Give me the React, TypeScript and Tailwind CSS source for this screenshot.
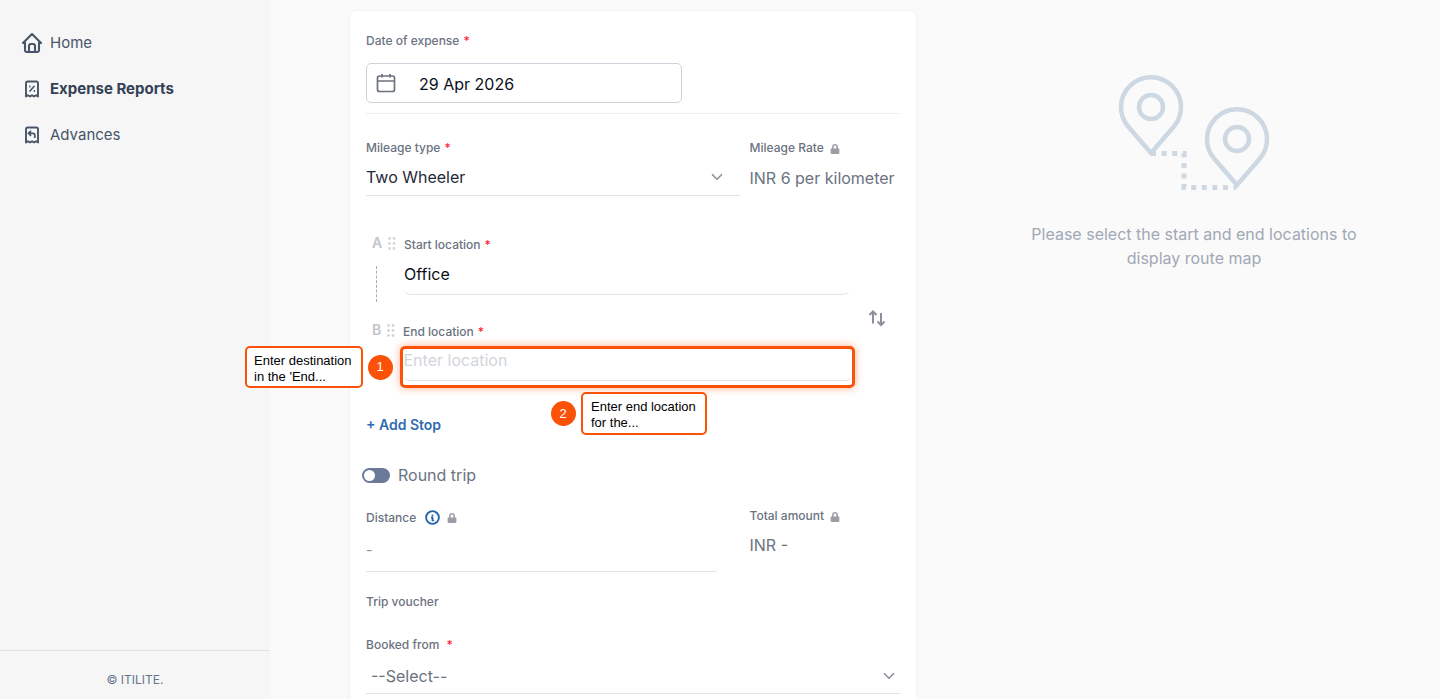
import { ChevronDown } from "lucide-react";
import { TbHome, TbInfoCircle } from "react-icons/tb";
import { FaLock } from "react-icons/fa";

function Required() {
  return <span className="text-[#ff1f3d] ml-1">*</span>;
}

function Label({ children }: { children: React.ReactNode }) {
  return <div className="text-xs leading-4 font-medium text-[#6b7280]">{children}</div>;
}

function SmallLock() {
  return <FaLock className="text-[#9b9ca6] ml-[6px] inline-block" size={10} />;
}

function NavItem({
  icon,
  label,
  active,
}: {
  icon: React.ReactNode;
  label: string;
  active?: boolean;
}) {
  return (
    <div className="h-[46px] flex items-center pl-[23px] gap-[9px]">
      <span className="w-[18px] flex justify-center text-[#475569]">{icon}</span>
      <span
        className={
          active
            ? "text-[15px] font-bold text-[#334155]"
            : "text-[15px] text-[#475569]"
        }
      >
        {label}
      </span>
    </div>
  );
}

function ReceiptIcon({ children }: { children: React.ReactNode }) {
  return (
    <svg width="16" height="18" viewBox="0 0 16 18" fill="none" stroke="currentColor" strokeWidth="1.9" className="shrink-0">
      <path d="M2 16.5V3a1.5 1.5 0 0 1 1.5-1.5h9A1.5 1.5 0 0 1 14 3v13.5l-2-1.2-2 1.2-2-1.2-2 1.2-2-1.2z" strokeLinejoin="round" />
      {children}
    </svg>
  );
}

function Grip() {
  return (
    <svg width="8" height="13" viewBox="0 0 8 13" fill="#d3d5da" className="ml-[6px]">
      <circle cx="1.5" cy="1.5" r="1.4" />
      <circle cx="6" cy="1.5" r="1.4" />
      <circle cx="1.5" cy="6.5" r="1.4" />
      <circle cx="6" cy="6.5" r="1.4" />
      <circle cx="1.5" cy="11.5" r="1.4" />
      <circle cx="6" cy="11.5" r="1.4" />
    </svg>
  );
}

function CalendarIcon() {
  return (
    <svg width="20" height="20" viewBox="0 0 20 20" fill="none" stroke="#6b7280" strokeWidth="1.7">
      <rect x="1.5" y="3" width="17" height="15.5" rx="2" />
      <path d="M1.5 8H18.5M6 1V4.5M14 1V4.5" />
    </svg>
  );
}

function SwapIcon() {
  return (
    <svg width="18" height="18" viewBox="0 0 18 18" fill="none" stroke="#8b909c" strokeWidth="2">
      <path d="M5 14.5V2.5M1.5 6L5 2.5L8.5 6" />
      <path d="M13 4V16M9.5 12.5L13 16L16.5 12.5" />
    </svg>
  );
}

function Pin({ x, y }: { x: number; y: number }) {
  return (
    <g transform={`translate(${x} ${y})`}>
      <path d="M0 46 L-22.5 20 A30 30 0 1 1 22.5 20 Z" strokeLinejoin="miter" />
      <circle cx="0" cy="0" r="12" />
    </g>
  );
}

function RouteArt() {
  return (
    <svg width="160" height="125" viewBox="1115 70 160 125" fill="none" stroke="#cdd8e3" strokeWidth="4.5" className="ml-[2px]">
      <Pin x={1151} y={107} />
      <Pin x={1237} y={139} />
      <path d="M1151 153.5H1184V187.5H1236" strokeWidth="5" strokeDasharray="5 5.6" />
    </svg>
  );
}

export default function App() {
  return (
    <div className="relative flex h-screen overflow-hidden bg-[#fafafa] font-['Inter',sans-serif]">
      <aside className="w-[270px] shrink-0 bg-[#f6f6f6] flex flex-col">
        <nav className="pt-5 flex-1">
          <NavItem icon={<TbHome size={24} strokeWidth={2.1} className="shrink-0" />} label="Home" />
          <NavItem
            icon={
              <ReceiptIcon>
                <path d="M5.5 11.5L10.5 6" strokeWidth="1.6" />
                <path d="M5.2 6.5h1.2M9.8 11h1.2" strokeWidth="1.8" />
              </ReceiptIcon>
            }
            label="Expense Reports"
            active
          />
          <NavItem
            icon={
              <ReceiptIcon>
                <path d="M10.8 12V9.3A2 2 0 0 0 8.8 7.3H4.8M7 4.8L4.5 7.3L7 9.8" strokeWidth="1.7" />
              </ReceiptIcon>
            }
            label="Advances"
          />
        </nav>
        <div className="h-[49px] border-t border-[#e2e2e2] flex items-center justify-center pt-[10px] text-xs text-[#64748b]">
          © ITILITE.
        </div>
      </aside>

      <main className="flex-1 flex items-start pl-20 min-w-0">
        <section className="w-[566px] shrink-0 mt-[11px] bg-white rounded-t-md shadow-[0_0_3px_rgba(0,0,0,0.07)] px-4 pt-[22px] pb-10">
          <Label>
            Date of expense
            <Required />
          </Label>
          <div className="mt-[14px] w-[316px] h-10 border border-[#cfd2db] rounded-[5px] flex items-center pl-[9px]">
            <CalendarIcon />
            <span className="ml-[23px] mt-[1px] text-base text-[#0b0f19]">29 Apr 2026</span>
          </div>
          <div className="mt-[10px] border-t border-[#eceef0]" />

          <div className="mt-[26px] flex">
            <div className="w-[374px]">
              <Label>
                Mileage type
                <Required />
              </Label>
              <div className="mt-[3px] h-[37px] border-b border-[#e2e4e8] flex items-center justify-between pr-[14px] text-base text-[#1f2937]">
                Two Wheeler
                <ChevronDown size={18} className="text-[#8b909c]" strokeWidth={2.2} />
              </div>
            </div>
            <div className="ml-[9.5px]">
              <Label>
                Mileage Rate
                <SmallLock />
              </Label>
              <div className="mt-[3px] h-[37px] flex items-center text-base text-[#6b7280] whitespace-nowrap">
                INR 6 per kilometer
              </div>
            </div>
          </div>

          <div className="mt-[41px] relative">
            <div className="flex">
              <div className="w-[38px] shrink-0 relative">
                <div className="flex items-center ml-[6px] -mt-[2px]">
                  <span className="text-sm leading-4 font-semibold text-[#c2c4ca]">A</span>
                  <Grip />
                </div>
                <div className="absolute left-[10px] top-[29px] h-[36px] border-l border-dashed border-[#a9acb3]" />
              </div>
              <div className="w-[445px]">
                <Label>
                  Start location
                  <Required />
                </Label>
                <div className="mt-[6px] h-[36px] border-b border-[#e2e4e8] rounded-b-md flex items-center pb-[6px] text-base text-[#0b0f19]">
                  Office
                </div>
              </div>
              <div className="relative w-[40px]">
                <div className="absolute left-[19px] top-[72px]">
                  <SwapIcon />
                </div>
              </div>
            </div>

            <div className="flex mt-[29px]">
              <div className="w-[37px] shrink-0">
                <div className="flex items-center ml-[6px] -mt-[2px]">
                  <span className="text-sm leading-4 font-semibold text-[#c2c4ca]">B</span>
                  <Grip />
                </div>
              </div>
              <div className="w-[446px]">
                <Label>
                  End location
                  <Required />
                </Label>
                <div className="relative mt-[6px] -ml-[3px] w-[455px] h-[42px] border-[3px] border-[#fb5208] rounded-[5px] shadow-[0_0_9px_rgba(251,82,8,0.45)] text-base leading-5 text-[#d1d5db] pl-[0.5px] pt-[1px]">
                  <div className="h-[31px] border-b border-[#e2e4e8] rounded-b-md">Enter location</div>
                </div>
              </div>
            </div>
          </div>

          <div className="mt-[27px] text-sm leading-5 font-semibold text-[#2f6cb0]">+ Add Stop</div>

          <div className="mt-[30px] -ml-1 flex items-center gap-2">
            <div className="w-[28px] h-[15px] rounded-full bg-[#6b7a99] flex items-center pl-[2px]">
              <div className="w-[11px] h-[11px] rounded-full bg-white" />
            </div>
            <span className="text-base leading-5 text-[#6b7280]">Round trip</span>
          </div>

          <div className="mt-[24px] flex">
            <div className="w-[350.5px]">
              <div className="flex items-center text-xs leading-4 font-medium text-[#6b7280]">
                Distance
                <TbInfoCircle size={17} strokeWidth={2.6} className="ml-2 text-[#1f63ad]" />
                <FaLock size={10} className="ml-[6px] text-[#9b9ca6]" />
              </div>
              <div className="mt-[14px] h-[32px] border-b border-[#e2e4e8] text-sm leading-5 text-[#8b909c]">-</div>
            </div>
            <div className="ml-[33px] -mt-[1px]">
              <Label>
                Total amount
                <SmallLock />
              </Label>
              <div className="mt-[9px] text-base leading-6 text-[#6b7280]">INR -</div>
            </div>
          </div>

          <div className="mt-[22px]">
            <Label>Trip voucher</Label>
          </div>

          <div className="mt-[27px]">
            <Label>
              Booked from <Required />
            </Label>
            <div className="mt-[7px] h-[34px] border-b border-[#e2e4e8] flex items-center justify-between pl-[5px] pr-[2px] pb-[2px] text-base text-[#6b7280]">
              --Select--
              <ChevronDown size={18} className="text-[#8b909c]" strokeWidth={2.2} />
            </div>
          </div>
        </section>

        <div className="ml-[32px] flex-1 flex flex-col items-center pt-[70px]">
          <RouteArt />
          <p className="mt-[27px] w-[340px] text-center text-base leading-6 text-[#a0a8b5]">
            Please select the start and end locations to display route map
          </p>
        </div>
      </main>

      <div className="absolute left-[245px] top-[346px] flex items-center gap-[5px]">
        <div className="w-[118px] h-[42px] bg-white border-2 border-[#fb5208] rounded-[5px] px-[7px] py-[5px] text-[13px] leading-4 text-black font-['Liberation_Sans',sans-serif] whitespace-nowrap">
          Enter destination
          <br />
          in the &apos;End...
        </div>
        <div className="w-[25px] h-[25px] rounded-full bg-[#fb5208] text-white text-[13px] flex items-center justify-center pr-[1px] font-['Liberation_Sans',sans-serif]">
          1
        </div>
      </div>
      <div className="absolute left-[551px] top-[392px] flex items-center gap-[5px]">
        <div className="w-[25px] h-[25px] rounded-full bg-[#fb5208] text-white text-[13px] flex items-center justify-center pr-[1px] font-['Liberation_Sans',sans-serif]">
          2
        </div>
        <div className="w-[126px] h-[43px] bg-white border-2 border-[#fb5208] rounded-[5px] px-2 py-[5px] text-[13px] leading-4 text-black font-['Liberation_Sans',sans-serif] whitespace-nowrap">
          Enter end location
          <br />
          for the...
        </div>
      </div>
    </div>
  );
}
